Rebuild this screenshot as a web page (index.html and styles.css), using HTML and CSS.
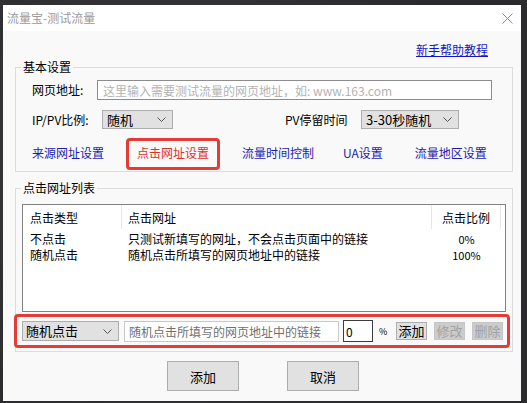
FILE: index.html
```html
<!DOCTYPE html>
<html lang="zh-CN">
<head>
<meta charset="utf-8">
<title>流量宝-测试流量</title>
<link rel="stylesheet" href="styles.css">
</head>
<body>
<div class="window">
  <div class="titlebar">
    <span class="title">流量宝-测试流量</span>
    <svg class="close" width="11" height="11" viewBox="0 0 11 11"><path d="M0.5 0.5L10.5 10.5M10.5 0.5L0.5 10.5" stroke="#8a8a8a" stroke-width="1" fill="none"/></svg>
  </div>
  <div class="helprow"><a class="help" href="#">新手帮助教程</a></div>

  <div class="group group-basic">
    <span class="legend">基本设置</span>
    <div class="row row-url">
      <span class="label label-url">网页地址:</span>
      <input class="textbox url" type="text" placeholder="这里输入需要测试流量的网页地址，如: www.163.com">
    </div>
    <div class="row row-opts">
      <span class="label label-ratio">IP/PV比例:</span>
      <div class="select sel-ratio"><span>随机</span><svg width="9" height="5" viewBox="0 0 9 5"><path d="M0.5 0.5L4.5 4.5L8.5 0.5" stroke="#555" fill="none"/></svg></div>
      <span class="label label-stay">PV停留时间</span>
      <div class="select sel-stay"><span>3-30秒随机</span><svg width="9" height="5" viewBox="0 0 9 5"><path d="M0.5 0.5L4.5 4.5L8.5 0.5" stroke="#555" fill="none"/></svg></div>
    </div>
    <div class="row row-links">
      <a class="link" href="#">来源网址设置</a>
      <a class="link active" href="#">点击网址设置</a>
      <a class="link" href="#">流量时间控制</a>
      <a class="link link-ua" href="#">UA设置</a>
      <a class="link link-area" href="#">流量地区设置</a>
    </div>
  </div>

  <div class="group group-list">
    <span class="legend">点击网址列表</span>
    <div class="listview">
      <div class="lv-head">
        <div class="c1">点击类型</div>
        <div class="c2">点击网址</div>
        <div class="c3">点击比例</div>
      </div>
      <div class="lv-row">
        <div class="c1">不点击</div>
        <div class="c2">只测试新填写的网址，不会点击页面中的链接</div>
        <div class="c3">0%</div>
      </div>
      <div class="lv-row">
        <div class="c1">随机点击</div>
        <div class="c2">随机点击所填写的网页地址中的链接</div>
        <div class="c3">100%</div>
      </div>
    </div>
    <div class="editrow">
      <div class="select sel-type"><span>随机点击</span><svg width="9" height="5" viewBox="0 0 9 5"><path d="M0.5 0.5L4.5 4.5L8.5 0.5" stroke="#555" fill="none"/></svg></div>
      <input class="textbox desc" type="text" value="随机点击所填写的网页地址中的链接">
      <input class="textbox pct" type="text" value="0">
      <span class="pct-sign">%</span>
      <button class="btn small">添加</button>
      <button class="btn small disabled">修改</button>
      <button class="btn small disabled">删除</button>
    </div>
  </div>

  <div class="actions">
    <button class="btn big">添加</button>
    <button class="btn big">取消</button>
  </div>
</div>
</body>
</html>
```
FILE: styles.css
```css
* { box-sizing: border-box; }
html, body { margin: 0; padding: 0; }
body {
  width: 527px;
  height: 403px;
  overflow: hidden;
  background: #2f2f31;
  background-image: radial-gradient(circle at 30% 40%, #3a3a3c 0, #2b2b2d 70%);
  font-family: "Noto Sans CJK SC", "Noto Sans", sans-serif;
  font-size: 12px;
  color: #000;
}
.window {
  margin: 5px 0 0 3px;
  width: 518px;
  height: 396px;
  background: #f9f9f9;
  display: flex;
  flex-direction: column;
}
.titlebar {
  height: 26px;
  flex: none;
  background: #fff;
  display: flex;
  align-items: center;
  justify-content: space-between;
  padding: 0 8px 0 4px;
}
.title { color: #9b9b9b; font-size: 12px; line-height: 16px; }
.close { display: block; }
.helprow {
  margin-top: 11px;
  height: 16px;
  display: flex;
  justify-content: flex-end;
  padding-right: 33px;
}
.help { color: #1414c8; text-decoration: underline; line-height: 16px; font-size: 12px; }

.group {
  position: relative;
  margin-left: 12px;
  width: 498px;
  border: 1px solid #dcdcdc;
}
.legend {
  position: absolute;
  left: 5px;
  top: -9px;
  padding: 0 2px;
  line-height: 16px;
  background: #f9f9f9;
  font-size: 12px;
}
.group-basic { margin-top: 9px; height: 105px; padding: 12px 0 0 16px; }
.row { display: flex; align-items: center; }
.label { line-height: 16px; white-space: nowrap; flex: none; }
.label-url { width: 65px; }
.label-ratio { width: 70px; }
.label-stay { width: 76px; margin-left: 112px; }
.textbox {
  font-family: "Noto Sans CJK SC", "Noto Sans", sans-serif;
  font-size: 12px;
  background: #fff;
  outline: none;
  margin: 0;
}
.url {
  width: 395px;
  height: 20px;
  border: 1px solid #8c8c8c;
  padding: 0 5px;
}
.url::placeholder { color: #b3b3b3; }
.row-opts { margin-top: 10px; }
.select {
  height: 19px;
  background: #e1e1e1;
  border: 1px solid #adadad;
  display: flex;
  align-items: center;
  justify-content: space-between;
  padding: 0 6px 0 4px;
  font-size: 13px;
  line-height: 16px;
  flex: none;
}
.select svg { display: block; }
.sel-ratio { width: 71px; }
.sel-stay { width: 98px; }
.row-links { margin-top: 9px; height: 32px; gap: 33px; }
.link {
  position: relative;
  color: #1c1cb0;
  text-decoration: none;
  line-height: 16px;
  margin-top: -2px;
  white-space: nowrap;
}
.link.active { color: #e0302c; }
.link.active::after {
  content: "";
  position: absolute;
  left: -11px;
  right: -11px;
  top: -7px;
  bottom: -9px;
  border: 3px solid #e33b36;
  border-radius: 4px;
}
.link-ua { margin-left: -4px; }
.link-area { margin-left: -1px; }

.group-list { margin-top: 16px; height: 164px; padding: 15px 0 0 6px; }
.listview {
  width: 484px;
  height: 108px;
  border: 1px solid #828282;
  background: #fff;
}
.lv-head, .lv-row { display: flex; }
.lv-head { height: 26px; align-items: stretch; }
.lv-head > div {
  display: flex;
  align-items: center;
  border-right: 1px solid #e6e6e6;
  margin-bottom: 2px;
}
.lv-row { height: 16px; line-height: 16px; }
.c1 { width: 99px; padding-left: 7px; }
.c2 { width: 310px; padding-left: 6px; }
.c3 { width: 69px; justify-content: center; text-align: center; }
.lv-row .c3 { font-size: 11px; }

.editrow {
  margin: 2px 0 0 -8px;
  width: 496px;
  height: 34px;
  border: 3px solid #e33b36;
  border-radius: 4px;
  display: flex;
  align-items: center;
  padding-left: 5px;
}
.sel-type { width: 97px; height: 20px; padding-left: 3px; font-size: 13px; }
.desc {
  margin-left: 5px;
  width: 215px;
  height: 21px;
  border: 1px solid #c8c8c8;
  padding: 0 4px;
  color: #6f6f6f;
  font-size: 12px;
}
.pct {
  margin-left: 4px;
  width: 30px;
  height: 22px;
  border: 1px solid #3c3c3c;
  padding: 0 2px;
  font-size: 12px;
}
.pct-sign { margin-left: 6px; font-size: 9px; width: 6px; }
.btn {
  font-family: "Noto Sans CJK SC", "Noto Sans", sans-serif;
  background: #e1e1e1;
  border: 1px solid #adadad;
  color: #000;
  padding: 0;
  margin: 0;
}
.small { width: 31px; height: 18px; font-size: 13px; line-height: 16px; margin-left: 7px; }
.pct-sign + .small { margin-left: 11px; }
.small.disabled { background: #cccccc; border-color: #c6c6c6; color: #a2a2a2; }
.actions {
  margin-top: 9px;
  display: flex;
  justify-content: center;
  gap: 48px;
  padding-left: 2px;
}
.big { width: 72px; height: 30px; font-size: 13px; }
```
